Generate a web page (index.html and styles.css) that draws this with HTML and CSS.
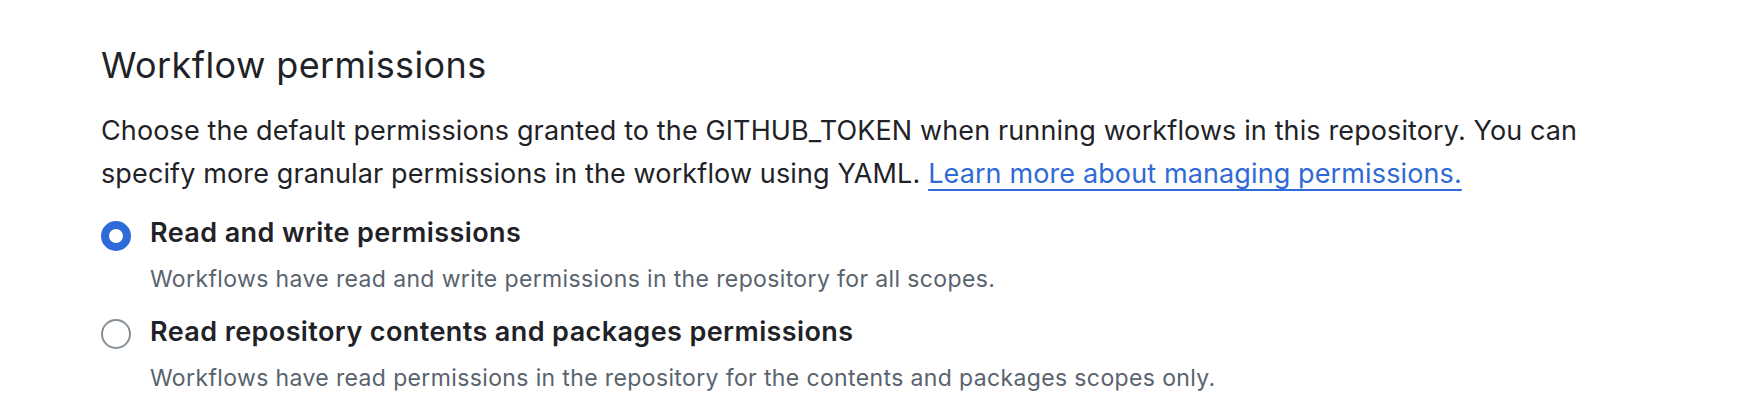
FILE: index.html
```html
<!DOCTYPE html>
<html lang="en">
<head>
<meta charset="utf-8">
<title>Workflow permissions</title>
<link rel="stylesheet" href="styles.css">
</head>
<body>
<section class="settings">
  <h2 class="heading">Workflow permissions</h2>
  <p class="intro">Choose the default permissions granted to the GITHUB_TOKEN when running workflows in this repository. You can specify more granular permissions in the workflow using YAML. <a class="link" href="#">Learn more about managing permissions.</a></p>
  <div class="options">
    <label class="option">
      <span class="radio radio-checked"></span>
      <span class="option-text">
        <span class="option-label">Read and write permissions</span>
        <span class="option-desc">Workflows have read and write permissions in the repository for all scopes.</span>
      </span>
    </label>
    <label class="option">
      <span class="radio"></span>
      <span class="option-text">
        <span class="option-label">Read repository contents and packages permissions</span>
        <span class="option-desc">Workflows have read permissions in the repository for the contents and packages scopes only.</span>
      </span>
    </label>
  </div>
</section>
</body>
</html>
```
FILE: styles.css
```css
html, body {
  margin: 0;
  padding: 0;
  background: #ffffff;
}
body {
  font-family: Inter, "Noto Sans", "Liberation Sans", sans-serif;
  color: #1f2328;
}
.settings {
  padding: 44px 101px 0 101px;
  display: flex;
  flex-direction: column;
}
.heading {
  margin: 0;
  font-size: 36px;
  letter-spacing: 0.4px;
  line-height: 42px;
  font-weight: 400;
  color: #1f2328;
}
.intro {
  margin: 23px 0 0 0;
  font-size: 27px;
  letter-spacing: 0.12px;
  line-height: 43px;
  max-width: 1520px;
  color: #1f2328;
}
.link {
  color: #2f6ad6;
  text-decoration: underline;
  text-decoration-thickness: 2px;
  text-underline-offset: 6px;
}
.options {
  display: flex;
  flex-direction: column;
  gap: 18.5px;
  margin-top: 20px;
}
.option {
  display: flex;
  align-items: flex-start;
  gap: 19px;
}
.radio {
  flex: none;
  box-sizing: border-box;
  width: 30px;
  height: 30px;
  margin-top: 5.5px;
  border-radius: 50%;
  border: 2px solid #868e96;
  background: #ffffff;
}
.radio-checked {
  border: 8px solid #2f6ad9;
}
.option-text {
  display: flex;
  flex-direction: column;
}
.option-label {
  font-size: 27px;
  letter-spacing: 0.4px;
  line-height: 36px;
  font-weight: 600;
  color: #1f2328;
}
.option-desc {
  margin-top: 12px;
  font-size: 23px;
  letter-spacing: 0.37px;
  line-height: 32px;
  color: #59636e;
}
```
